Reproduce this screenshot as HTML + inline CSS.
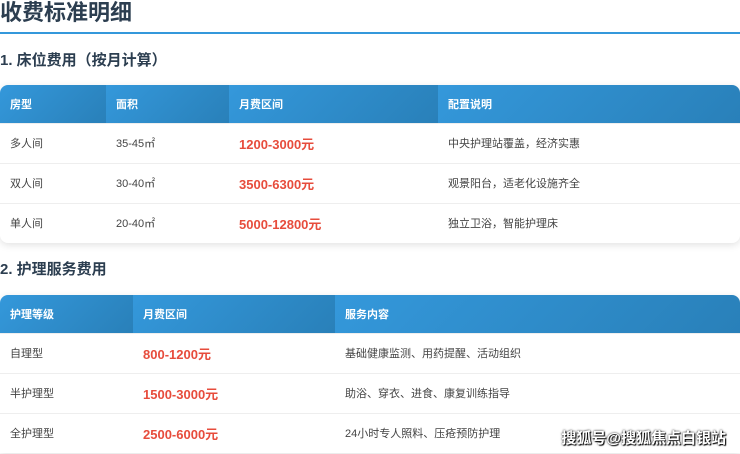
<!DOCTYPE html>
<html><head><meta charset="utf-8"><style>
*{margin:0;padding:0;box-sizing:border-box}
body{width:740px;height:454px;overflow:hidden;background:#fff;font-family:"Liberation Sans","Noto Sans CJK SC",sans-serif;color:#333;position:relative}
h1{position:absolute;left:0;top:-1px;font-size:22px;font-weight:bold;color:#2c3e50;line-height:28px}
.line{position:absolute;left:0;top:32px;width:740px;height:2px;background:#3498db}
h2{position:absolute;left:0;font-size:15px;font-weight:bold;color:#2c3e50;line-height:20px}
table{position:absolute;left:0;width:740px;border-collapse:collapse;border-radius:8px;overflow:hidden;box-shadow:0 2px 8px rgba(0,0,0,.12)}
th{background:linear-gradient(135deg,#3498db,#2980b9);color:#fff;font-size:11px;font-weight:bold;text-align:left;padding-left:10px;height:38px}
td{font-size:11px;color:#444;padding-left:10px;height:40px;border-top:1px solid #eee}
td.p{color:#e74c3c;font-size:13px;font-weight:bold}
.wm{position:absolute;right:14px;top:427px;font-size:15px;color:#fff;font-weight:bold;text-shadow:0 0 2px #000,1px 1px 1px #000}
</style></head><body>
<h1>收费标准明细</h1>
<div class="line"></div>
<h2 style="top:51px">1. 床位费用（按月计算）</h2>
<table style="top:85px">
<tr><th style="width:106px">房型</th><th style="width:123px">面积</th><th style="width:209px">月费区间</th><th>配置说明</th></tr>
<tr><td>多人间</td><td>35-45㎡</td><td class="p">1200-3000元</td><td>中央护理站覆盖，经济实惠</td></tr>
<tr><td>双人间</td><td>30-40㎡</td><td class="p">3500-6300元</td><td>观景阳台，适老化设施齐全</td></tr>
<tr><td>单人间</td><td>20-40㎡</td><td class="p">5000-12800元</td><td>独立卫浴，智能护理床</td></tr>
</table>
<h2 style="top:260px">2. 护理服务费用</h2>
<table style="top:295px;border-bottom-left-radius:0;border-bottom-right-radius:0">
<tr><th style="width:133px;height:37px">护理等级</th><th style="width:202px">月费区间</th><th>服务内容</th></tr>
<tr><td>自理型</td><td class="p">800-1200元</td><td>基础健康监测、用药提醒、活动组织</td></tr>
<tr><td>半护理型</td><td class="p">1500-3000元</td><td>助浴、穿衣、进食、康复训练指导</td></tr>
<tr><td>全护理型</td><td class="p">2500-6000元</td><td>24小时专人照料、压疮预防护理</td></tr>
</table>
<div class="wm">搜狐号@搜狐焦点白银站</div>
</body></html>
